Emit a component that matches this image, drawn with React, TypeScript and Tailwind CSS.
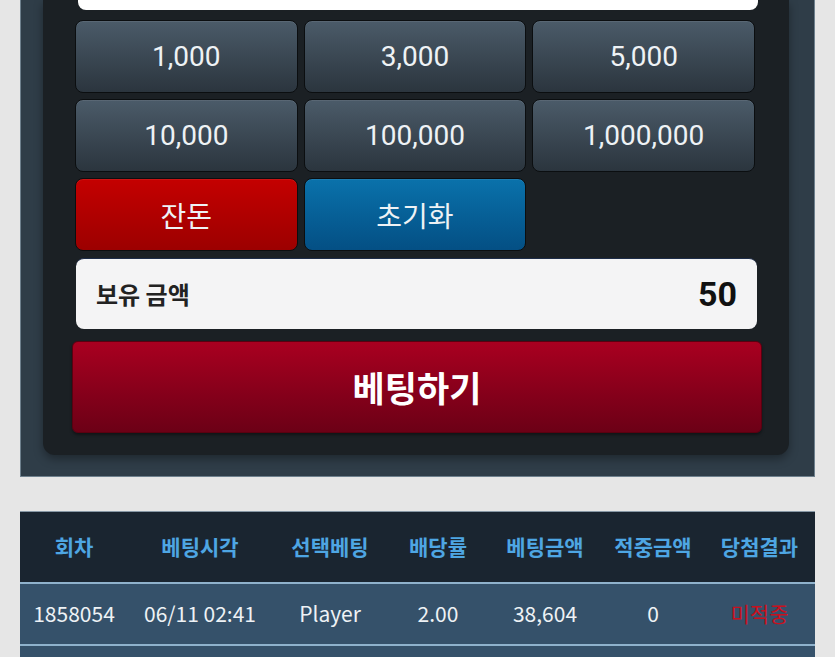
const amounts = ['1,000', '3,000', '5,000', '10,000', '100,000', '1,000,000'];

const columns = [
  { label: '회차', w: 'w-[108px]' },
  { label: '베팅시각', w: 'w-[144px]' },
  { label: '선택베팅', w: 'w-[116px]' },
  { label: '배당률', w: 'w-[100px]' },
  { label: '베팅금액', w: 'w-[114px]' },
  { label: '적중금액', w: 'w-[102px]' },
  { label: '당첨결과', w: 'w-[111px]' },
];

const btnBase =
  'h-[73px] rounded-lg border border-[#0b0e10] flex items-center justify-center text-[28px] text-[#eef2f5] shadow-[inset_0_1px_0_rgba(255,255,255,0.08)]';

function AmountButton({ label }: { label: string }) {
  return (
    <button className={`${btnBase} bg-gradient-to-b from-[#4b5b69] to-[#2b353e] font-['Roboto',sans-serif]`}>
      {label}
    </button>
  );
}

export default function App() {
  return (
    <div className="min-h-[657px] bg-[#e6e6e6] font-['Noto_Sans_CJK_KR',sans-serif]">
      <div className="mx-[20px] bg-[#2f3d48] border-b border-x border-[#6e808d] pl-[22px] pr-[25px] pb-[21px]">
        <div className="bg-[#1b2024] rounded-b-xl shadow-[0_4px_10px_rgba(0,0,0,0.35)] pl-[32px] pr-[34px] pb-[22px]">
          <div className="h-[10px] bg-white rounded-b-lg ml-[3px] mr-[-3px]" />
          <div className="grid grid-cols-3 gap-[6px] mt-[10px]">
            {amounts.map((a) => (
              <AmountButton key={a} label={a} />
            ))}
            <button className={`${btnBase} bg-gradient-to-b from-[#c40000] to-[#9c0000]`}>잔돈</button>
            <button className={`${btnBase} bg-gradient-to-b from-[#0a72ab] to-[#044f84]`}>초기화</button>
          </div>
          <div className="mt-[7px] ml-[1px] mr-[-2px] h-[71px] bg-[#f4f4f5] rounded-lg flex items-center justify-between pl-[20px] pr-[20px] border-t border-[#1d2c48]">
            <span className="text-[24px] font-bold text-[#222]">보유 금액</span>
            <span className="text-[34px] font-bold text-[#111] font-['Roboto',sans-serif]">50</span>
          </div>
          <button className="mt-[12px] ml-[-3px] w-[calc(100%+10px)] h-[92px] rounded-md border border-[#5a0010] bg-gradient-to-b from-[#a90020] to-[#6c0016] text-white text-[35px] font-bold flex items-center justify-center shadow-[0_2px_3px_rgba(0,0,0,0.4)]">
            베팅하기
          </button>
        </div>
      </div>

      <div className="mx-[20px] mt-[34px] border-t border-[#8798a5]">
        <table className="w-full table-fixed border-collapse">
          <thead>
            <tr className="bg-[#1a2530] h-[71px]">
              {columns.map((c) => (
                <th key={c.label} className={`${c.w} text-[21px] font-bold text-[#4ea6e3] text-center`}>
                  {c.label}
                </th>
              ))}
            </tr>
          </thead>
          <tbody>
            <tr className="bg-[#35516a] h-[62px] border-t-2 border-[#8fb2cc]">
              <td className="text-center text-[21px] text-[#eef2f5]">1858054</td>
              <td className="text-center text-[21px] text-[#eef2f5]">06/11 02:41</td>
              <td className="text-center text-[21px] text-[#eef2f5]">Player</td>
              <td className="text-center text-[21px] text-[#eef2f5]">2.00</td>
              <td className="text-center text-[21px] text-[#eef2f5]">38,604</td>
              <td className="text-center text-[21px] text-[#eef2f5]">0</td>
              <td className="text-center text-[21px] text-[#c8101e]">미적중</td>
            </tr>
            <tr className="bg-[#35516a] h-[62px] border-t-2 border-[#8fb2cc]">
              <td colSpan={7} />
            </tr>
          </tbody>
        </table>
      </div>
    </div>
  );
}
